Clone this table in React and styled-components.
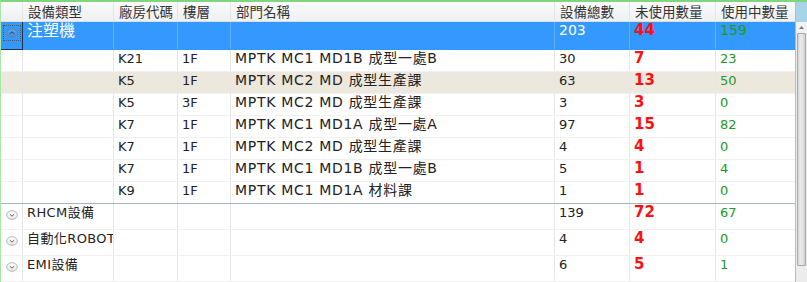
import React from "react";
import styled, { createGlobalStyle, css } from "styled-components";

const Global = createGlobalStyle`
  html, body { margin: 0; padding: 0; background: #ffffff; }
  body { font-family: "DejaVu Sans", "Noto Sans CJK TC", sans-serif; }
`;

const COLS = "22px 91px 64px 53px 324px 75px 86px 80px";

const Frame = styled.div`
  width: 807px;
  height: 282px;
  box-sizing: border-box;
  border-top: 2px solid #7fd67f;
  border-left: 1px solid #a6e6a6;
  display: flex;
  overflow: hidden;
  background: #fff;
`;

const Table = styled.div`
  flex: 1;
  display: flex;
  flex-direction: column;
  min-width: 0;
`;

const HeaderRow = styled.div`
  display: grid;
  grid-template-columns: ${COLS};
  height: 20px;
  background: linear-gradient(#fbfbfc, #eef0f2);
  border-bottom: 1px solid #dcdfe3;
  box-sizing: border-box;
`;

const HeaderCell = styled.div`
  font-family: "Noto Sans CJK TC", sans-serif;
  font-size: 13.5px;
  line-height: 19px;
  color: #333;
  padding-left: 5px;
  border-right: 1px solid #e4e6ea;
  white-space: nowrap;
  overflow: hidden;
`;

const Row = styled.div`
  display: grid;
  grid-template-columns: ${COLS};
  height: ${(p) => p.$h}px;
  box-sizing: border-box;
  background: ${(p) => (p.$selected ? "#3399ff" : p.$alt ? "#ede8dd" : "#fff")};
  border-bottom: 1px solid ${(p) => (p.$sep ? "#a7b6c6" : p.$selected ? "#3399ff" : "#f1f1f1")};
`;

const Cell = styled.div`
  font-size: ${(p) => p.$size || 13}px;
  line-height: 17px;
  padding-left: 4px;
  white-space: nowrap;
  overflow: hidden;
  color: ${(p) => (p.$selected ? "#fff" : "#222")};
  border-right: 1px solid ${(p) => (p.$selected ? "#62b1ff" : "#e6e6e6")};
  ${(p) =>
    p.$wide &&
    css`
      font-size: 14px;
      letter-spacing: 0.7px;
    `}
  ${(p) =>
    p.$label &&
    css`
      letter-spacing: 0.4px;
    `}
  ${(p) =>
    p.$tone === "red" &&
    css`
      color: #ff1010;
      font-weight: bold;
      font-size: 15px;
    `}
  ${(p) =>
    p.$tone === "green" &&
    css`
      color: #229a22;
    `}
`;

const IconCell = styled.div`
  box-sizing: border-box;
  display: flex;
  justify-content: center;
  align-items: flex-start;
  padding-top: ${(p) => (p.$focus ? 3 : 6)}px;
  border-right: 1px solid ${(p) => (p.$focus ? "#22344a" : "#e6e6e6")};
  ${(p) =>
    p.$focus &&
    css`
      border-left: 1px solid #22344a;
      border-bottom: 1px solid #22344a;
      margin-left: -1px;
      margin-bottom: -1px;
    `}
`;

const FocusBox = styled.div`
  border: 1px dotted #555;
  padding: 2px 2px;
  display: flex;
`;

const Filler = styled.div`
  flex: 1;
  display: grid;
  grid-template-columns: ${COLS};
`;

const FillCol = styled.div`
  border-right: 1px solid #e6e6e6;
`;

const Scroll = styled.div`
  width: 12px;
  display: flex;
  flex-direction: column;
  border-left: 1px solid #b8bcc0;
  box-sizing: border-box;
  background: #ececec;
`;

const ScrollCap = styled.div`
  height: 20px;
  background: #a7d4e6;
`;

const ScrollArrow = styled.div`
  height: 11px;
  display: flex;
  align-items: center;
  justify-content: center;
  background: #f2f2f2;
`;

const Thumb = styled.div`
  height: 233px;
  margin: 0 1px;
  box-sizing: border-box;
  border: 1px solid #a9a9a9;
  border-radius: 1px;
  background: linear-gradient(90deg, #d6d6d6, #ececec 40%, #e6e6e6 60%, #cfcfcf);
`;

function Expander({ open }) {
  return (
    <svg width="12" height="10" viewBox="0 0 12 10">
      <defs>
        <linearGradient id={open ? "go" : "gc"} x1="0" y1="0" x2="0" y2="1">
          <stop offset="0" stopColor={open ? "#5aa8f0" : "#ffffff"} />
          <stop offset="1" stopColor={open ? "#3b8fe0" : "#e8e8e8"} />
        </linearGradient>
      </defs>
      <ellipse cx="6" cy="5" rx="5.3" ry="4.3" fill={`url(#${open ? "go" : "gc"})`} stroke={open ? "#6a7f97" : "#b5b5b5"} strokeWidth="1" />
      {open ? (
        <path d="M3.6 6 L6 3.8 L8.4 6" fill="none" stroke="#2a3a4e" strokeWidth="1" />
      ) : (
        <path d="M3.8 4.2 L6 6.2 L8.2 4.2" fill="none" stroke="#666" strokeWidth="1" />
      )}
    </svg>
  );
}

const headers = ["", "設備類型", "廠房代碼", "樓層", "部門名稱", "設備總數", "未使用數量", "使用中數量"];

const details = [
  ["K21", "1F", "MPTK MC1 MD1B 成型一處B", "30", "7", "23"],
  ["K5", "1F", "MPTK MC2 MD 成型生產課", "63", "13", "50"],
  ["K5", "3F", "MPTK MC2 MD 成型生產課", "3", "3", "0"],
  ["K7", "1F", "MPTK MC1 MD1A 成型一處A", "97", "15", "82"],
  ["K7", "1F", "MPTK MC2 MD 成型生產課", "4", "4", "0"],
  ["K7", "1F", "MPTK MC1 MD1B 成型一處B", "5", "1", "4"],
  ["K9", "1F", "MPTK MC1 MD1A 材料課", "1", "1", "0"],
];

const groups = [
  ["RHCM設備", "139", "72", "67"],
  ["自動化ROBOT", "4", "4", "0"],
  ["EMI設備", "6", "5", "1"],
];

export default function App() {
  return (
    <>
      <Global />
      <Frame>
        <Table>
          <HeaderRow>
            {headers.map((h, i) => (
              <HeaderCell key={i}>{h}</HeaderCell>
            ))}
          </HeaderRow>

          <Row $h={28} $selected>
            <IconCell $focus>
              <FocusBox>
                <Expander open />
              </FocusBox>
            </IconCell>
            <Cell $selected $size={16}>注塑機</Cell>
            <Cell $selected />
            <Cell $selected />
            <Cell $selected />
            <Cell $selected $size={14}>203</Cell>
            <Cell $selected $tone="red">44</Cell>
            <Cell $selected $tone="green" $size={14}>159</Cell>
          </Row>

          {details.map((d, i) => (
            <Row key={i} $h={22} $alt={i === 1} $sep={i === details.length - 1}>
              <IconCell />
              <Cell />
              <Cell>{d[0]}</Cell>
              <Cell>{d[1]}</Cell>
              <Cell $wide>{d[2]}</Cell>
              <Cell>{d[3]}</Cell>
              <Cell $tone="red">{d[4]}</Cell>
              <Cell $tone="green">{d[5]}</Cell>
            </Row>
          ))}

          {groups.map((g, i) => (
            <Row key={i} $h={26}>
              <IconCell>
                <Expander />
              </IconCell>
              <Cell $label>{g[0]}</Cell>
              <Cell />
              <Cell />
              <Cell />
              <Cell>{g[1]}</Cell>
              <Cell $tone="red">{g[2]}</Cell>
              <Cell $tone="green">{g[3]}</Cell>
            </Row>
          ))}
          <Filler>
            {headers.map((_, i) => (
              <FillCol key={i} />
            ))}
          </Filler>
        </Table>
        <Scroll>
          <ScrollCap />
          <ScrollArrow>
            <svg width="5" height="3" viewBox="0 0 5 3">
              <path d="M0 3 L2.5 0 L5 3 Z" fill="#777" />
            </svg>
          </ScrollArrow>
          <Thumb />
        </Scroll>
      </Frame>
    </>
  );
}
